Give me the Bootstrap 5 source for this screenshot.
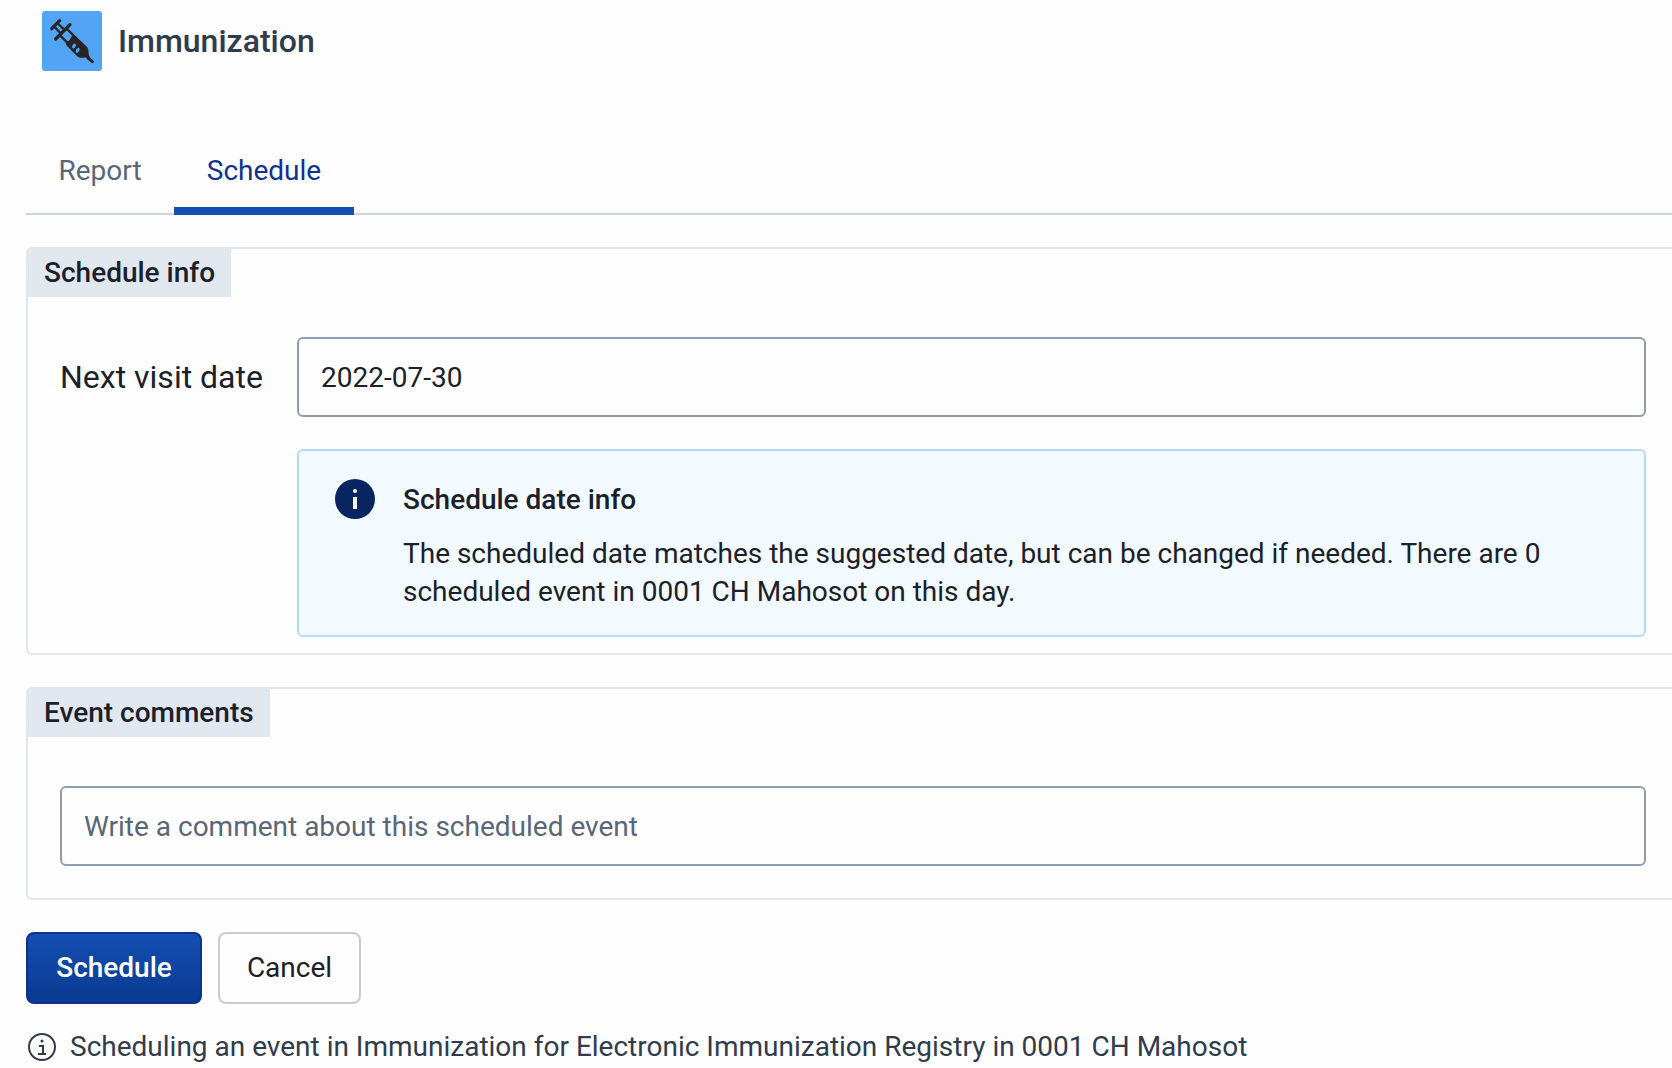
<!DOCTYPE html>
<html lang="en">
<head>
<meta charset="utf-8">
<meta name="viewport" content="width=device-width, initial-scale=1">
<title>Immunization</title>
<link rel="stylesheet" href="https://cdn.jsdelivr.net/npm/bootstrap@5.3.0/dist/css/bootstrap.min.css">
<style>
  body { font-family: Roboto, "Liberation Sans", sans-serif; font-size: 28px; line-height: 38px; color: #1b202a; background: #fefefe; }
  .page-shell { padding-left: 26px; }
  .program-head { padding: 11px 16px 0; gap: 16px; margin-bottom: 56px; }
  .program-icon { width: 60px; height: 60px; }
  .program-title { font-size: 32px; line-height: 38px; font-weight: 500; color: #303b4d; }
  .view-tabs { border-bottom: 2px solid #cbd5e0; margin-bottom: 32px; }
  .view-tabs .nav-link { min-width: 148px; padding: 25px 32px 17px; border: 0; border-bottom: 8px solid transparent; border-radius: 0; margin-bottom: -2px; color: #5a6679; background: none; text-align: center; }
  .view-tabs .nav-link.active { min-width: 180px; color: #0e3192; background: none; border-bottom-color: #144fb3; }
  .form-block { border: 2px solid #e1e7ef; border-radius: 6px 0 0 6px; margin-bottom: 32px; background: #fefefe; }
  .block-title { font-size: 28px; line-height: 38px; font-weight: 500; padding: 5px 16px; background: #e1e7ef; }
  .block-body { padding: 40px 26px 16px 32px; }
  .comment-body { padding: 49px 26px 32px 32px; }
  .field-grid { column-gap: 32px; }
  .field-label { min-width: 205px; height: 80px; font-size: 32px; }
  .form-control.field-box { height: 80px; padding: 0 22px; border: 2px solid #919eb0; border-radius: 6px; font-size: 28px; color: #1b202a; background: #fefefe; }
  .form-control.field-box::placeholder { color: #5a6679; opacity: 1; }
  .notice { margin: 32px 0 0; padding: 28px 36px 24px; gap: 28px; border: 2px solid #b7dafc; border-radius: 6px; background: #f2f9ff; color: #1b202a; }
  .notice-icon { width: 40px; height: 40px; }
  .notice-title { font-size: 28px; line-height: 38px; font-weight: 500; margin-bottom: 16px; padding-top: 2px; }
  .btn.action { height: 72px; padding: 0 24px; font-size: 28px; border: 2px solid #cacbd3; border-radius: 8px; color: #1b202a; background: #fefefe; min-width: 143px; }
  .btn.action-main { min-width: 176px; font-weight: 500; color: #fefefe; border-color: #0e3192; background: linear-gradient(#144fb3, #0a3a91); }
  .context-note { padding: 24px 2px 0; gap: 14px; color: #303b4d; }
  .context-icon { width: 28px; height: 28px; }
</style>
<script src="https://cdn.jsdelivr.net/npm/bootstrap@5.3.0/dist/js/bootstrap.bundle.min.js" defer></script>
</head>
<body>
<main class="page-shell">
  <header class="program-head d-flex align-items-center">
    <svg class="program-icon flex-shrink-0" viewBox="0 0 180 180" aria-hidden="true">
      <rect width="180" height="180" rx="10" fill="#54a4f5"/>
      <g fill="none" stroke="#262626" stroke-linecap="round">
        <path stroke-width="10" d="M29 53 53 29M41 84 84 41"/>
        <path stroke-width="7" d="M36 46 58 69M46 36 69 58M54 73 82 101M74 53 102 81"/>
      </g>
      <path fill="#262626" d="M71 92 C84 91 85 82 90 74 L101 75 L136 109 Q141 116 140 130 L145 141 L156 151 Q157 158 150 156 L138 147 L130 139 Q117 143 107 137 L73 103 Z"/>
      <g fill="#54a4f5">
        <ellipse cx="96" cy="105" rx="5" ry="8" transform="rotate(28 96 105)"/>
        <ellipse cx="107" cy="118" rx="5" ry="8" transform="rotate(28 107 118)"/>
      </g>
    </svg>
    <h1 class="program-title mb-0">Immunization</h1>
  </header>

  <ul class="nav nav-tabs view-tabs">
    <li class="nav-item"><a class="nav-link" href="#report">Report</a></li>
    <li class="nav-item"><a class="nav-link active" href="#schedule" aria-current="page">Schedule</a></li>
  </ul>

  <form id="schedule">
    <section class="form-block border-end-0" aria-labelledby="info-title">
      <div class="d-flex"><h2 class="block-title mb-0" id="info-title">Schedule info</h2></div>
      <div class="block-body">
        <div class="row g-0 flex-nowrap field-grid">
          <div class="col-auto">
            <label class="field-label d-flex align-items-center" for="visit-date">Next visit date</label>
          </div>
          <div class="col">
            <input class="form-control field-box" id="visit-date" type="text" value="2022-07-30">
            <div class="alert notice d-flex align-items-start" role="status">
              <svg class="notice-icon flex-shrink-0" viewBox="0 0 40 40" aria-hidden="true">
                <circle cx="20" cy="20" r="20" fill="#0a245f"/>
                <circle cx="20" cy="12" r="2" fill="#f2f9ff"/>
                <path fill="#f2f9ff" d="M18 18h4v12h-4z"/>
              </svg>
              <div>
                <h3 class="notice-title">Schedule date info</h3>
                <p class="mb-0">The scheduled date matches the suggested date, but can be changed if needed. There are 0 scheduled event in 0001 CH Mahosot on this day.</p>
              </div>
            </div>
          </div>
        </div>
      </div>
    </section>

    <section class="form-block border-end-0" aria-labelledby="comments-title">
      <div class="d-flex"><h2 class="block-title mb-0" id="comments-title">Event comments</h2></div>
      <div class="comment-body">
        <input class="form-control field-box" type="text" aria-labelledby="comments-title" placeholder="Write a comment about this scheduled event">
      </div>
    </section>

    <div class="d-flex gap-3">
      <button class="btn action action-main" type="button">Schedule</button>
      <button class="btn action" type="button">Cancel</button>
    </div>
    <div class="context-note d-flex align-items-center">
      <svg class="context-icon flex-shrink-0" viewBox="0 0 28 28" fill="none" stroke="#303b4d" stroke-width="2" aria-hidden="true">
        <circle cx="14" cy="14" r="13"/>
        <path d="M11 13h4v8M10 21h8"/>
        <circle cx="14" cy="8" r="1.5" fill="#303b4d" stroke="none"/>
      </svg>
      <span>Scheduling an event in Immunization for Electronic Immunization Registry in 0001 CH Mahosot</span>
    </div>
  </form>
</main>
</body>
</html>
